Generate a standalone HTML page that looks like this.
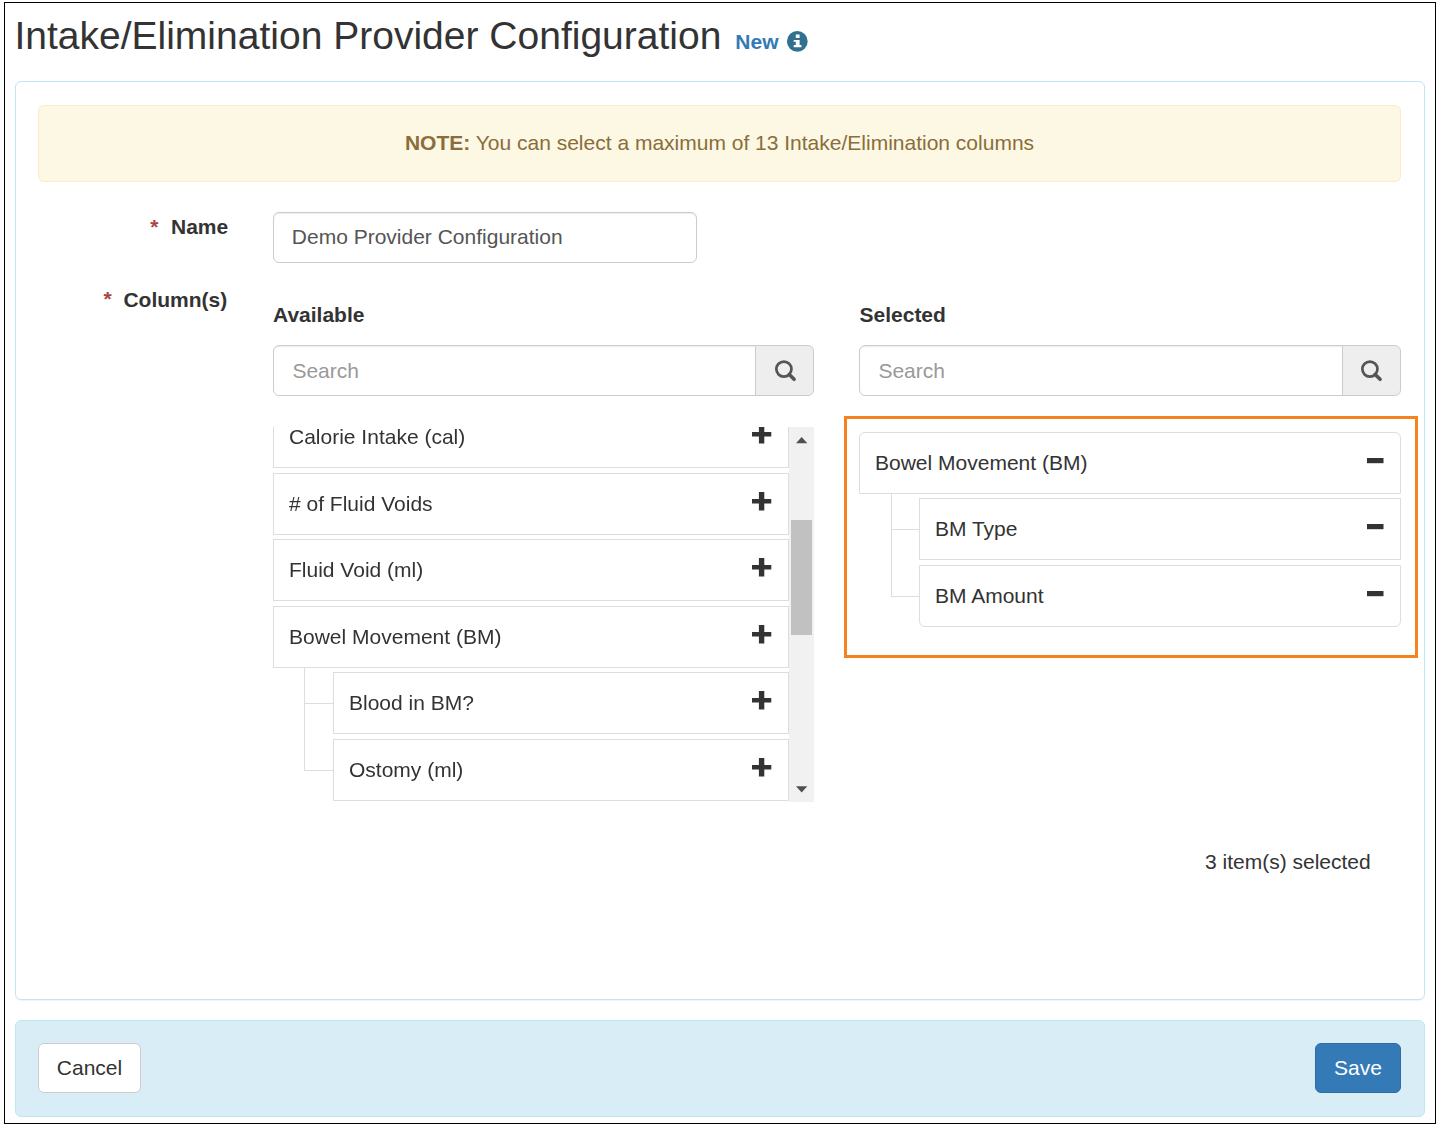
<!DOCTYPE html>
<html lang="en">
<head>
<meta charset="utf-8">
<title>Intake/Elimination Provider Configuration</title>
<style>
*{box-sizing:border-box;margin:0;padding:0}
html,body{width:1440px;height:1129px;background:#fff;overflow:hidden}
body{position:relative;font-family:"Liberation Sans",Arial,Helvetica,sans-serif;font-size:21px;color:#333;line-height:30px}
.abs{position:absolute}
.t{position:absolute;white-space:nowrap;line-height:30px;height:30px}
.b{font-weight:bold}
#frame{left:4px;top:2px;width:1432px;height:1122px;border:1px solid #000}
#title{left:14.4px;top:13.2px;font-size:39.02px;line-height:46px;height:46px;color:#333;letter-spacing:0}
#new{left:735.3px;top:27px;color:#337ab7;font-weight:bold}
#panel{left:15px;top:81px;width:1410px;height:919px;border:1px solid #bce8f1;border-radius:6px;background:#fff;box-shadow:0 1px 1px rgba(0,0,0,.05)}
#alert{left:38px;top:105px;width:1363px;height:77px;background:#fcf8e3;border:1px solid #faebcc;border-radius:6px;color:#8a6d3b;text-align:center;line-height:30px;padding-top:21.5px}
.req{color:#a94442}
.inp{position:absolute;height:51px;border:1px solid #ccc;border-radius:6px;background:#fff;box-shadow:inset 0 1px 1px rgba(0,0,0,.075);color:#555;padding:9.5px 0 0 17.8px;line-height:30px;white-space:nowrap}
.inp.l{border-radius:6px 0 0 6px}
.ph{color:#999}
.addon{position:absolute;height:51px;width:59px;border:1px solid #ccc;border-radius:0 6px 6px 0;background:#eee}
.addon svg{overflow:visible;position:absolute;left:17.5px;top:13px}
.item{position:absolute;height:62px;border:1px solid #ddd;background:#fff;padding:14.6px 0 0 15px;line-height:30px;white-space:nowrap;color:#333}
.item svg{position:absolute}
.ln{position:absolute;background:#ddd}
#avail{left:273px;top:427px;width:541px;height:375px;overflow:hidden;will-change:transform}
#sbar{left:516px;top:0;width:25px;height:375px;background:#f1f1f1}
#thumb{left:2px;top:93px;width:21px;height:115px;background:#c1c1c1}
#selbox{left:844px;top:416px;width:574px;height:242px;border:3px solid #f5821f}
#footer{left:15px;top:1020px;width:1410px;height:97px;background:#d9edf7;border:1px solid #bce8f1;border-radius:6px}
.btn{position:absolute;height:50px;border-radius:6px;line-height:30px;padding-top:9px;text-align:center;white-space:nowrap}
#cancel{left:38px;top:1043px;width:103px;background:#fff;border:1px solid #ccc;color:#333}
#save{left:1315px;top:1043px;width:86px;background:#337ab7;border:1px solid #2e6da4;color:#fff}
</style>
</head>
<body>
<div id="frame" class="abs"></div>

<h1 id="title" class="t" style="font-weight:normal">Intake/Elimination Provider Configuration</h1>
<span id="new" class="t">New</span>
<svg class="abs" style="left:780px;top:24px" width="34" height="34" viewBox="0 0 34 34"><circle cx="17.3" cy="17.4" r="10.35" fill="#31708f"/><path fill="#fff" d="M15.8 10.4h3.8v3.6h-3.8zM13.7 16h5.9v5.1h1.8v2.2h-7.7v-2.2h2.1v-3.3h-2.1z"/></svg>

<div id="panel" class="abs"></div>
<div id="alert" class="abs"><span class="b">NOTE:</span> You can select a maximum of 13 Intake/Elimination columns</div>

<!-- Name row -->
<span class="t req b" style="left:150.2px;top:211.5px">*</span>
<label class="t b" style="left:171px;top:211.8px">Name</label>
<div class="inp" style="left:273px;top:212px;width:424px;padding-top:8.8px">Demo Provider Configuration</div>

<!-- Columns row -->
<span class="t req b" style="left:103.6px;top:284px">*</span>
<label class="t b" style="left:123.4px;top:285px">Column(s)</label>

<span class="t b" style="left:273px;top:300px">Available</span>
<span class="t b" style="left:859.5px;top:300px">Selected</span>

<!-- Available search -->
<div class="inp l" style="left:273px;top:345px;width:483px;padding-left:18.4px"><span class="ph">Search</span></div>
<div class="addon" style="left:755px;top:345px">
  <svg width="22" height="22" viewBox="0 0 22 22"><circle cx="9.9" cy="10.1" r="7.55" fill="none" stroke="#555" stroke-width="2.7"/><path d="M15.2 15.4 L20.1 20.3" stroke="#555" stroke-width="3.6" stroke-linecap="round"/></svg>
</div>

<!-- Selected search -->
<div class="inp l" style="left:859px;top:345px;width:484px;padding-left:18.4px"><span class="ph">Search</span></div>
<div class="addon" style="left:1342px;top:345px;width:59px">
  <svg width="22" height="22" viewBox="0 0 22 22" style="left:17px"><circle cx="9.9" cy="10.1" r="7.55" fill="none" stroke="#555" stroke-width="2.7"/><path d="M15.2 15.4 L20.1 20.3" stroke="#555" stroke-width="3.6" stroke-linecap="round"/></svg>
</div>

<!-- Available list -->
<div id="avail" class="abs">
  <div class="item" style="left:0;top:-21px;width:516px">Calorie Intake (cal)<svg style="left:477.4px;top:18.2px" width="21" height="20" viewBox="0 0 21 20"><path fill="#333" d="M7.9 0h5.4v6.9H20.3v4.6h-7V18.5H7.9v-7H1V6.9h6.9z"/></svg></div>
  <div class="item" style="left:0;top:46px;width:516px"># of Fluid Voids<svg style="left:477.4px;top:18.2px" width="21" height="20" viewBox="0 0 21 20"><path fill="#333" d="M7.9 0h5.4v6.9H20.3v4.6h-7V18.5H7.9v-7H1V6.9h6.9z"/></svg></div>
  <div class="item" style="left:0;top:112px;width:516px">Fluid Void (ml)<svg style="left:477.4px;top:18.2px" width="21" height="20" viewBox="0 0 21 20"><path fill="#333" d="M7.9 0h5.4v6.9H20.3v4.6h-7V18.5H7.9v-7H1V6.9h6.9z"/></svg></div>
  <div class="item" style="left:0;top:179px;width:516px">Bowel Movement (BM)<svg style="left:477.4px;top:18.2px" width="21" height="20" viewBox="0 0 21 20"><path fill="#333" d="M7.9 0h5.4v6.9H20.3v4.6h-7V18.5H7.9v-7H1V6.9h6.9z"/></svg></div>
  <div class="ln" style="left:31px;top:240px;width:1px;height:104px"></div>
  <div class="ln" style="left:31px;top:276px;width:29px;height:1px"></div>
  <div class="ln" style="left:31px;top:343px;width:29px;height:1px"></div>
  <div class="item" style="left:60px;top:245px;width:456px">Blood in BM?<svg style="left:417.4px;top:18.2px" width="21" height="20" viewBox="0 0 21 20"><path fill="#333" d="M7.9 0h5.4v6.9H20.3v4.6h-7V18.5H7.9v-7H1V6.9h6.9z"/></svg></div>
  <div class="item" style="left:60px;top:312px;width:456px">Ostomy (ml)<svg style="left:417.4px;top:18.2px" width="21" height="20" viewBox="0 0 21 20"><path fill="#333" d="M7.9 0h5.4v6.9H20.3v4.6h-7V18.5H7.9v-7H1V6.9h6.9z"/></svg></div>
  <div id="sbar" class="abs">
    <div id="thumb" class="abs"></div>
    <svg class="abs" style="left:6.9px;top:9.7px" width="12" height="7" viewBox="0 0 12 7"><path fill="#505050" d="M0 6.3L5.65 0L11.3 6.3z"/></svg>
    <svg class="abs" style="left:6.7px;top:359px" width="12" height="7" viewBox="0 0 12 7"><path fill="#505050" d="M0 0.2L5.65 6.5L11.3 0.2z"/></svg>
  </div>
</div>

<!-- Selected list -->
<div id="selbox" class="abs"></div>
<div class="item" style="left:859px;top:432px;width:542px;border-radius:6px 6px 0 0">Bowel Movement (BM)<svg style="left:507px;top:25px" width="17" height="6" viewBox="0 0 17 6"><rect x="0" y="0" width="16.5" height="5.2" fill="#333"/></svg></div>
<div class="ln" style="left:891px;top:493px;width:1px;height:104px"></div>
<div class="ln" style="left:891px;top:529px;width:28px;height:1px"></div>
<div class="ln" style="left:891px;top:596px;width:28px;height:1px"></div>
<div class="item" style="left:919px;top:498.4px;width:482px;border-radius:0">BM Type<svg style="left:447px;top:25px" width="17" height="6" viewBox="0 0 17 6"><rect x="0" y="0" width="16.5" height="5.2" fill="#333"/></svg></div>
<div class="item" style="left:919px;top:565px;width:482px;border-radius:0 0 6px 6px">BM Amount<svg style="left:447px;top:25px" width="17" height="6" viewBox="0 0 17 6"><rect x="0" y="0" width="16.5" height="5.2" fill="#333"/></svg></div>

<span class="t" style="left:1205px;top:846.5px">3 item(s) selected</span>

<!-- Footer -->
<div id="footer" class="abs"></div>
<div id="cancel" class="btn">Cancel</div>
<div id="save" class="btn">Save</div>
</body>
</html>
